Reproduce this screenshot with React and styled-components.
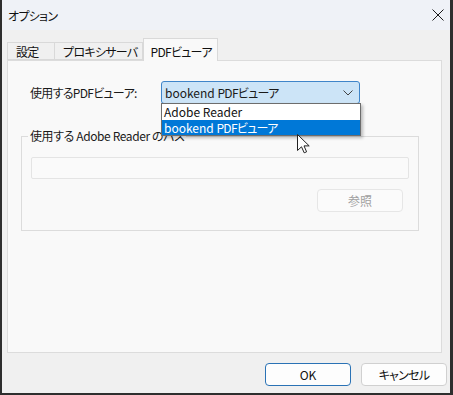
import styled, { createGlobalStyle } from "styled-components";

const GlobalStyle = createGlobalStyle`
	body {
		margin: 0;
		font-family: "Noto Sans CJK JP", "Noto Sans", sans-serif;
		font-size: 12px;
		font-feature-settings: "palt";
		color: #1a1a1a;
	}
`;

const tabs = [
	{ label: "設定", width: 48 },
	{ label: "プロキシサーバ", width: 78 },
	{ label: "PDFビューア", width: 67, active: true },
];

export default function App() {
	return (
		<>
			<GlobalStyle />
			<Window>
				<TitleBar>
					<Title>オプション</Title>
					<svg width="12" height="12" viewBox="0 0 12 12">
						<path d="M0.5 0.5 L11.5 11.5 M11.5 0.5 L0.5 11.5" stroke="#1a1a1a" strokeWidth="1" />
					</svg>
				</TitleBar>

				<Body>
					<TabStrip>
						{tabs.map((t) => (
							<Tab key={t.label} $w={t.width} $active={t.active}>
								{t.label}
							</Tab>
						))}
					</TabStrip>

					<Panel>
						<Row>
							<Label>使用するPDFビューア:</Label>
							<Combo>
								<span>
									bookend <Jp>PDFビューア</Jp>
								</span>
								<svg width="10" height="6" viewBox="0 0 10 6">
									<path d="M0.5 0.5 L5 5 L9.5 0.5" fill="none" stroke="#444" strokeWidth="1" />
								</svg>
								<DropList>
									<Option>Adobe Reader</Option>
									<Option $selected>
										bookend <Jp>PDFビューア</Jp>
									</Option>
								</DropList>
							</Combo>
						</Row>

						<Group>
							<Legend>使用する Adobe Reader のパス</Legend>
							<PathBox />
							<ButtonRow>
								<Button $disabled>参照</Button>
							</ButtonRow>
						</Group>
					</Panel>

					<Footer>
						<Button $primary>OK</Button>
						<Button>
							<Jp>キャンセル</Jp>
						</Button>
					</Footer>
				</Body>

				<Cursor width="13" height="20" viewBox="0 0 13 20">
					<path
						d="M0.5 0.5 L0.5 16.5 L4.5 12.8 L7.2 18.8 L9.6 17.8 L7 11.9 L12.2 11.9 Z"
						fill="#fff"
						stroke="#222"
						strokeWidth="1"
						strokeLinejoin="round"
					/>
				</Cursor>
			</Window>
		</>
	);
}

// Yu Gothic UI kana run much narrower than Noto's, tighten Japanese runs
const Jp = styled.span`
	letter-spacing: -0.7px;
`;

const Window = styled.div`
	position: relative;
	width: 453px;
	height: 395px;
	box-sizing: border-box;
	border-left: 2px solid #2e2e2e;
	border-right: 3px solid #2e2e2e;
	border-bottom: 2px solid #2e2e2e;
	background: #f0f0f0;
	display: flex;
	flex-direction: column;
`;

const TitleBar = styled.div`
	height: 30px;
	flex: none;
	background: #eff2f7;
	display: flex;
	align-items: center;
	justify-content: space-between;
	padding: 0 6px 0 6px;
`;

const Title = styled.div`
	font-size: 12px;
	letter-spacing: -0.7px;
	color: #111;
`;

const Body = styled.div`
	flex: 1;
	display: flex;
	flex-direction: column;
	padding: 8px 0 0 5px;
`;

const TabStrip = styled.div`
	display: flex;
	align-items: flex-end;
	height: 22px;
	position: relative;
	z-index: 1;
`;

const Tab = styled.div`
	box-sizing: border-box;
	min-width: ${(p) => p.$w}px;
	height: ${(p) => (p.$active ? 23 : 18)}px;
	margin-bottom: ${(p) => (p.$active ? -1 : 0)}px;
	padding: ${(p) => (p.$active ? "2px 5px 0 7px" : "0 4px 0 8px")};
	border: 1px solid #d9d9d9;
	border-bottom: ${(p) => (p.$active ? "none" : "1px solid #d9d9d9")};
	border-left-width: ${(p) => (p.$active ? 1 : 0)}px;
	&:first-child {
		border-left-width: 1px;
	}
	background: ${(p) => (p.$active ? "#f9f9f9" : "#f0f0f0")};
	display: flex;
	align-items: center;
	font-size: 12px;
	letter-spacing: -0.7px;
	color: #111;
	white-space: nowrap;
`;

const Panel = styled.div`
	box-sizing: border-box;
	width: 435px;
	height: 293px;
	border: 1px solid #dcdcdc;
	background: #f9f9f9;
	padding: 20px 0 0 13px;
	display: flex;
	flex-direction: column;
`;

const Row = styled.div`
	display: flex;
	align-items: center;
	margin-left: 9px;
	height: 23px;
`;

const Label = styled.div`
	width: 131px;
	font-size: 12px;
	letter-spacing: -0.7px;
`;

const Combo = styled.div`
	position: relative;
	box-sizing: border-box;
	width: 199px;
	height: 23px;
	border: 1px solid #3f85c9;
	border-radius: 3px;
	background: #cce4f7;
	display: flex;
	align-items: center;
	justify-content: space-between;
	padding: 0 6px 0 3px;
	font-size: 12px;
	svg {
		margin-top: 1px;
	}
`;

const DropList = styled.div`
	position: absolute;
	top: 21px;
	left: -1px;
	width: 200px;
	box-sizing: border-box;
	border: 1px solid #6d6d6d;
	background: #fff;
	box-shadow: 2px 2px 3px rgba(0, 0, 0, 0.25);
	z-index: 5;
`;

const Option = styled.div`
	height: 15.5px;
	line-height: 15.5px;
	padding-left: 2px;
	font-size: 12px;
	background: ${(p) => (p.$selected ? "#0078d7" : "#fff")};
	color: ${(p) => (p.$selected ? "#fff" : "#111")};
`;

const Group = styled.fieldset`
	width: 398px;
	box-sizing: border-box;
	margin: 24px 0 0 0;
	padding: 0 9px 18px 9px;
	border: 1px solid #dcdcdc;
	min-width: 0;
`;

const Legend = styled.legend`
	margin-left: -3px;
	padding: 0 2px;
	font-size: 12px;
	line-height: 16px;
	letter-spacing: -0.4px;
`;

const PathBox = styled.div`
	margin-top: 13px;
	height: 22px;
	box-sizing: border-box;
	border: 1px solid #e4e4e4;
	border-radius: 2px;
	background: #fafafa;
`;

const ButtonRow = styled.div`
	display: flex;
	justify-content: flex-end;
	margin-top: 10px;
	padding-right: 6px;
`;

const Button = styled.div`
	box-sizing: border-box;
	width: 86px;
	height: 23px;
	border-radius: 4px;
	display: flex;
	align-items: center;
	justify-content: center;
	font-size: 12px;
	border: 1px solid ${(p) => (p.$primary ? "#2a72b5" : p.$disabled ? "#e6e6e6" : "#d0d0d0")};
	background: ${(p) => (p.$disabled ? "#fbfbfb" : "#fdfdfd")};
	color: ${(p) => (p.$disabled ? "#a0a0a0" : "#111")};
`;

const Footer = styled.div`
	flex: 1;
	display: flex;
	justify-content: flex-end;
	align-items: flex-start;
	gap: 10px;
	padding: 10px 3px 0 0;
`;

const Cursor = styled.svg`
	position: absolute;
	left: 295px;
	top: 134px;
	z-index: 10;
`;
